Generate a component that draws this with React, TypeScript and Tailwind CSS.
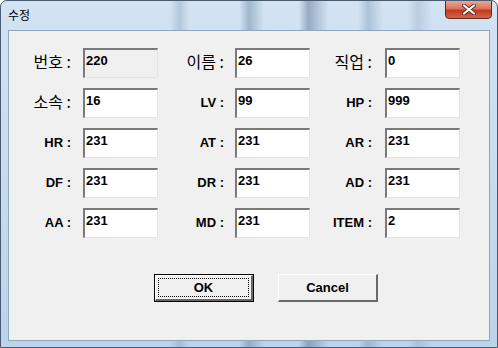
import React from "react";

type Field = { label: string; value: string; ko?: boolean; disabled?: boolean };

const rows: Field[][] = [
  [
    { label: "번호 :", value: "220", ko: true, disabled: true },
    { label: "이름 :", value: "26", ko: true },
    { label: "직업 :", value: "0", ko: true },
  ],
  [
    { label: "소속 :", value: "16", ko: true },
    { label: "LV :", value: "99" },
    { label: "HP :", value: "999" },
  ],
  [
    { label: "HR :", value: "231" },
    { label: "AT :", value: "231" },
    { label: "AR :", value: "231" },
  ],
  [
    { label: "DF :", value: "231" },
    { label: "DR :", value: "231" },
    { label: "AD :", value: "231" },
  ],
  [
    { label: "AA :", value: "231" },
    { label: "MD :", value: "231" },
    { label: "ITEM :", value: "2" },
  ],
];

// label widths / gaps per column, measured off the screenshot
const labelW = ["w-[62px]", "w-[66px]", "w-[62px]"];
const gapL = ["ml-[12px]", "ml-[11px]", "ml-[13px]"];

function Cell({ f, col }: { f: Field; col: number }) {
  return (
    <div className="flex items-start">
      <div
        className={`${labelW[col]} flex justify-end text-black whitespace-nowrap ${
          f.ko
            ? "text-[16px] font-normal font-['Noto_Sans_CJK_KR',sans-serif] leading-[22px] pt-[2px]"
            : "text-[13px] font-bold font-['Liberation_Sans',Arial,sans-serif] leading-[22px] pt-[4px]"
        }`}
      >
        {f.label}
      </div>
      <div
        className={`${gapL[col]} w-[75px] h-[30px] border-t-2 border-l-2 border-b border-r border-t-[#7a7a7a] border-l-[#7a7a7a] border-b-[#e3e3e3] border-r-[#e3e3e3] ${
          f.disabled ? "bg-[#f0f0f0]" : "bg-white"
        } px-[1px] pt-[3px] text-[13px] font-bold font-['Liberation_Sans',Arial,sans-serif] leading-[15px] text-black`}
      >
        {f.value}
      </div>
    </div>
  );
}

function Btn({ children, focus }: { children: React.ReactNode; focus?: boolean }) {
  return (
    <div
      className={`w-[100px] h-[28px] bg-[#f0f0f0] ${
        focus ? "border border-black" : ""
      } flex`}
    >
      <div className="flex-1 border-t border-l border-t-white border-l-white border-b-2 border-r-2 border-b-[#696969] border-r-[#696969] flex p-[2px]">
        <div
          className={`flex-1 flex items-center justify-center text-[13px] font-bold font-['Liberation_Sans',Arial,sans-serif] text-black ${
            focus ? "border border-dotted border-black" : ""
          }`}
        >
          {children}
        </div>
      </div>
    </div>
  );
}

export default function App() {
  return (
    <div className="w-[498px] h-[348px] flex flex-col rounded-t-[7px] border border-[#4b5b6f] bg-[linear-gradient(90deg,transparent_0%,transparent_34%,rgba(90,120,150,0.25)_36%,transparent_38%,transparent_48%,rgba(70,100,130,0.35)_50%,transparent_53%,transparent_60%,rgba(60,90,120,0.4)_62%,transparent_66%,transparent_72%,rgba(90,120,150,0.3)_74%,transparent_77%,transparent_82%,rgba(90,120,150,0.2)_84%,transparent_87%),linear-gradient(180deg,#d3e3f4,#bcd3ec)] overflow-hidden">
      <div className="h-[29px] flex items-start justify-between pl-[7px] pr-[5px]">
        <div className="pt-[6px] text-[12px] leading-[16px] text-black font-['Noto_Sans_CJK_KR',sans-serif]">
          수정
        </div>
        <div className="w-[47px] h-[19px] -mt-px rounded-b-[4px] border border-[#5f2a22] bg-[linear-gradient(180deg,#e9a696_0%,#d9735e_45%,#c0391f_55%,#d3664a_100%)] flex items-center justify-center">
          <svg width="14" height="11" viewBox="0 0 14 11">
            <path
              d="M2 1.5 L12 9.5 M12 1.5 L2 9.5"
              stroke="#5a2a20"
              strokeWidth="4"
              strokeLinecap="round"
            />
            <path
              d="M2 1.5 L12 9.5 M12 1.5 L2 9.5"
              stroke="#ffffff"
              strokeWidth="2.2"
              strokeLinecap="round"
            />
          </svg>
        </div>
      </div>
      <div className="flex-1 mx-[7px] mb-[6px] border border-[#8fa6bf] bg-[#f0f0f0] flex flex-col">
        <div className="flex flex-col gap-[10px] pt-[17px]">
          {rows.map((r, i) => (
            <div key={i} className="flex">
              {r.map((f, j) => (
                <Cell key={j} f={f} col={j} />
              ))}
            </div>
          ))}
        </div>
        <div className="flex gap-[24px] pl-[145px] mt-[36px]">
          <Btn focus>OK</Btn>
          <Btn>Cancel</Btn>
        </div>
      </div>
    </div>
  );
}
